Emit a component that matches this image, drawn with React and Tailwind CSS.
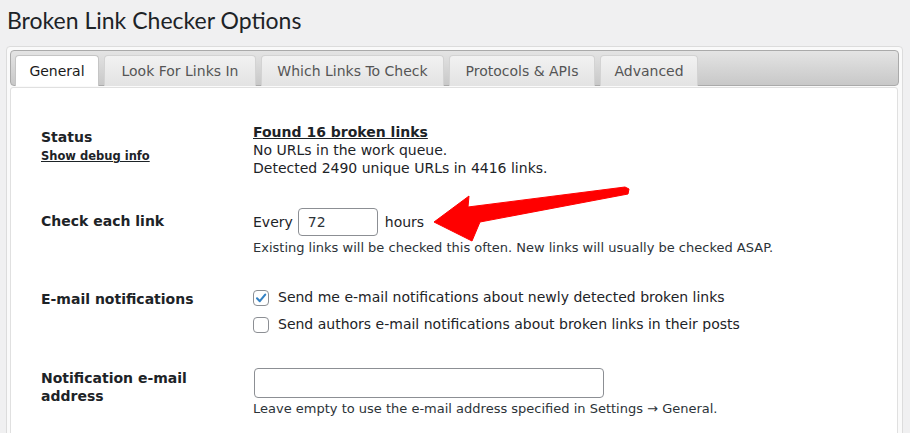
import React from "react";

const verdana = { fontFamily: '"DejaVu Sans", Verdana, sans-serif' };

function Tab({ label, active, w }) {
  return (
    <div
      className={
        "relative mb-[-1px] h-[31px] flex items-center justify-center rounded-t-[4px] border border-b-0 text-[14px] " +
        (active
          ? "bg-white border-[#c5c5c5] text-[#1a1a1a]"
          : "bg-gradient-to-b from-[#f2f2f2] to-[#e3e3e3] border-[#d3d3d3] text-[#555]")
      }
      style={{ width: w }}
    >
      {label}
    </div>
  );
}

function Checkbox({ checked }) {
  return (
    <span className="w-[16px] h-[16px] rounded-[4px] border border-[#8c8f94] bg-white flex items-center justify-center shrink-0">
      {checked && (
        <svg width="14" height="14" viewBox="0 0 14 14">
          <path d="M3 7.3 L5.8 10.2 L11.2 3.6" fill="none" stroke="#3582c4" strokeWidth="2.1" strokeLinecap="round" strokeLinejoin="round" />
        </svg>
      )}
    </span>
  );
}

export default function App() {
  return (
    <div className="relative w-[910px] h-[433px] overflow-hidden bg-[#f0f0f1] text-[#1d2327]" style={verdana}>
      <h1
        className="pl-[7px] pt-[5px] text-[23px] leading-[30px] font-normal text-[#1d2327]"
        style={{ fontFamily: 'Lato, "Open Sans", sans-serif' }}
      >
        Broken Link Checker Options
      </h1>
      <div className="mt-[11px] ml-[6px] w-[897px] h-[400px] rounded-[4px] border border-[#dcdcdc] bg-[#fafafa] p-[3px]">
        <div className="h-[36px] rounded-[4px] border border-[#aaaaaa] bg-gradient-to-b from-[#e4e4e4] to-[#c8c8c8] flex items-end gap-[5px] pl-[4px]">
          <Tab label="General" active w={84} />
          <Tab label="Look For Links In" w={152} />
          <Tab label="Which Links To Check" w={183} />
          <Tab label="Protocols & APIs" w={146} />
          <Tab label="Advanced" w={98} />
        </div>
        <div className="mt-px h-[360px] w-[888px] rounded-[3px] border border-[#e0e0e0] bg-white pl-[30px] pt-[20px]">
          {/* Status */}
          <div className="flex">
            <div className="w-[212px] pt-[20px]">
              <div className="text-[14px] leading-[18px] font-bold">Status</div>
              <div className="mt-[3px] text-[11.5px] leading-[15px] font-bold underline">Show debug info</div>
            </div>
            <div className="pt-[15px] pb-[15px] text-[14px] leading-[18px]">
              <div className="font-bold underline">Found 16 broken links</div>
              <div>No URLs in the work queue.</div>
              <div>Detected 2490 unique URLs in 4416 links.</div>
            </div>
          </div>
          {/* Check each link */}
          <div className="flex">
            <div className="w-[212px] pt-[20px] text-[14px] leading-[18px] font-bold">Check each link</div>
            <div className="pt-[15px] pb-[15px]">
              <div className="h-[30px] flex items-center text-[14px]">
                <span>Every</span>
                <div className="ml-[5px] w-[80px] h-[28px] rounded-[4px] border border-[#8c8f94] bg-white flex items-center pl-[9px] text-[14px] text-[#2c3338]">
                  72
                </div>
                <span className="ml-[7px]">hours</span>
              </div>
              <div className="mt-[3px] text-[13px] leading-[15px] text-[#2c3338]">
                Existing links will be checked this often. New links will usually be checked ASAP.
              </div>
            </div>
          </div>
          {/* E-mail notifications */}
          <div className="flex">
            <div className="w-[212px] pt-[20px] text-[14px] leading-[18px] font-bold">E-mail notifications</div>
            <div className="pt-[15px] pb-[12px] text-[14px]">
              <div className="h-[25px] flex items-center gap-[9px]">
                <Checkbox checked />
                <span>Send me e-mail notifications about newly detected broken links</span>
              </div>
              <div className="mt-[2px] h-[25px] flex items-center gap-[9px]">
                <Checkbox />
                <span>Send authors e-mail notifications about broken links in their posts</span>
              </div>
            </div>
          </div>
          {/* Notification e-mail address */}
          <div className="flex">
            <div className="w-[212px] pt-[20px] pr-[30px] text-[14px] leading-[18px] font-bold">Notification e-mail address</div>
            <div className="pt-[19px]">
              <div className="ml-px w-[350px] h-[30px] rounded-[4px] border border-[#8c8f94] bg-white"></div>
              <div className="mt-[3px] text-[13px] leading-[15px] text-[#2c3338]">
                Leave empty to use the e-mail address specified in Settings → General.
              </div>
            </div>
          </div>
        </div>
      </div>
      <svg className="absolute left-0 top-0 pointer-events-none" width="910" height="433">
        <polygon
          points="434,222 469,196 468,207 625,187 629,189 628,194 480,222 472,241"
          fill="#ff0000"
          stroke="#ff0000"
          strokeWidth="1"
          strokeLinejoin="round"
        />
      </svg>
    </div>
  );
}
